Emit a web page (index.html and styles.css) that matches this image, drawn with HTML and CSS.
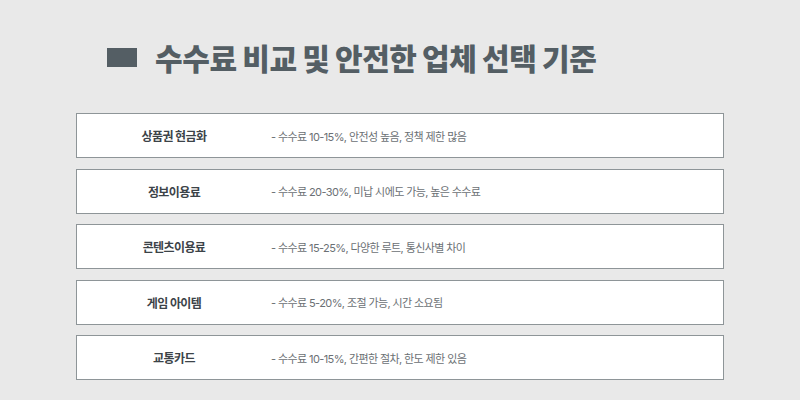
FILE: index.html
```html
<!DOCTYPE html>
<html lang="ko">
<head>
<meta charset="utf-8">
<link rel="stylesheet" href="styles.css">
</head>
<body>
<div class="page">
  <h1 class="title"><span class="mark"></span><span class="title-text">수수료 비교 및 안전한 업체 선택 기준</span></h1>
  <div class="list">
    <div class="row"><div class="label">상품권 현금화</div><div class="desc">- 수수료 10-15%, 안전성 높음, 정책 제한 많음</div></div>
    <div class="row"><div class="label">정보이용료</div><div class="desc">- 수수료 20-30%, 미납 시에도 가능, 높은 수수료</div></div>
    <div class="row"><div class="label">콘텐츠이용료</div><div class="desc">- 수수료 15-25%, 다양한 루트, 통신사별 차이</div></div>
    <div class="row"><div class="label">게임 아이템</div><div class="desc">- 수수료 5-20%, 조절 가능, 시간 소요됨</div></div>
    <div class="row"><div class="label">교통카드</div><div class="desc">- 수수료 10-15%, 간편한 절차, 한도 제한 있음</div></div>
  </div>
</div>
</body>
</html>
```

FILE: styles.css
```css
html, body {
  margin: 0;
  padding: 0;
  background: #e9e9e9;
  font-family: Inter, "Noto Sans CJK KR", sans-serif;
}
.page {
  width: 800px;
  height: 400px;
  overflow: hidden;
  padding-top: 37px;
  box-sizing: border-box;
}
.title {
  display: flex;
  align-items: center;
  margin: 0 0 0 107px;
  height: 40px;
  gap: 18px;
  font-size: 30px;
  font-weight: 900;
  color: #545e64;
  letter-spacing: -0.4px;
}
.mark {
  width: 30px;
  height: 19px;
  background: #545e64;
  flex: none;
}
.list {
  margin: 36px 0 0 76px;
  width: 648px;
  display: flex;
  flex-direction: column;
  gap: 10.5px;
}
.row {
  height: 45px;
  box-sizing: border-box;
  border: 1px solid #8e9598;
  background: #fff;
  display: flex;
  align-items: center;
}
.label {
  width: 194px;
  text-align: center;
  font-size: 12px;
  font-weight: 700;
  color: #3c4348;
  letter-spacing: -0.6px;
  flex: none;
}
.desc {
  font-size: 11px;
  color: #6b7074;
  letter-spacing: -0.6px;
}
```
